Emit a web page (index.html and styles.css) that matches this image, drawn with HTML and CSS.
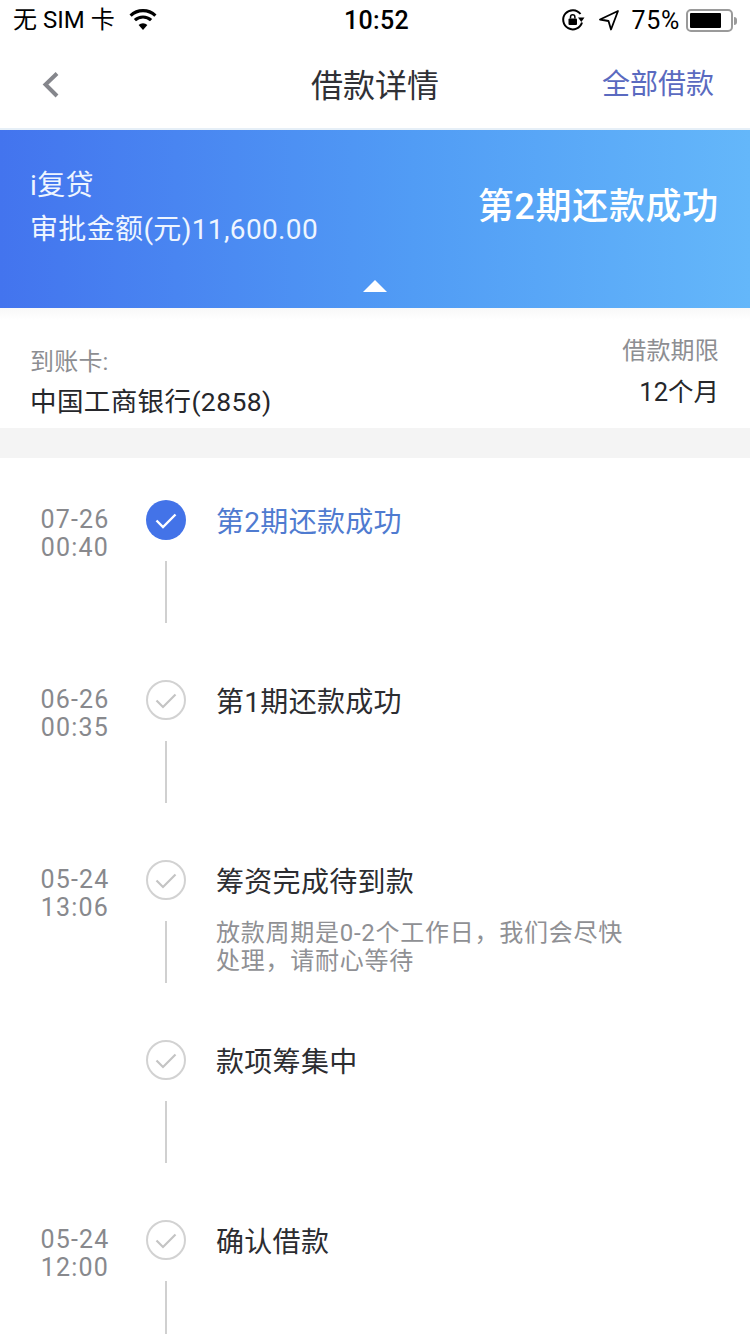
FILE: index.html
```html
<!DOCTYPE html>
<html lang="zh-CN">
<head>
<meta charset="utf-8">
<title>借款详情</title>
<link rel="stylesheet" href="styles.css">
</head>
<body>
<div class="page">
  <div class="status">
    <div class="status-side">
      <span class="carrier">无 SIM 卡</span>
      <svg class="wifi" viewBox="0 0 30 22" width="30" height="22"><path d="M15 21l-4.400-5a6.400 6.400 0 0 1 8.800 0z" fill="#000"/><path d="M6.900 11.200a11.800 11.800 0 0 1 16.200 0" fill="none" stroke="#000" stroke-width="3.200"/><path d="M2.600 6.600a18 18 0 0 1 24.800 0" fill="none" stroke="#000" stroke-width="3.200"/></svg>
    </div>
    <span class="clock">10:52</span>
    <div class="status-side status-right">
      <svg class="lock" viewBox="0 0 24 24" width="24" height="24"><path d="M21 14.500A9.600 9.600 0 1 1 19.500 6" fill="none" stroke="#000" stroke-width="2"/><path d="M17 9.500h6.500l-3.200 4.500z" fill="#000"/><rect x="7.500" y="10.500" width="8.500" height="6.500" rx="1" fill="#000"/><path d="M9.500 10.500V9a2.200 2.200 0 0 1 4.400 0v1.500" fill="none" stroke="#000" stroke-width="1.500"/></svg>
      <svg class="arrow" viewBox="0 0 22 22" width="22" height="22"><path d="M20 2L2 10.500l8.500 1.500L13 20.500z" fill="none" stroke="#000" stroke-width="1.800" stroke-linejoin="round"/></svg>
      <span class="pct">75%</span>
      <div class="battery"><div class="battery-fill"></div></div>
      <div class="battery-tip"></div>
    </div>
  </div>

  <div class="nav">
    <div class="nav-side nav-back">
      <svg viewBox="0 0 24 32" width="24" height="32"><path d="M18 4.500L6.500 15.500 18 27" fill="none" stroke="#85868c" stroke-width="4"/></svg>
    </div>
    <div class="nav-title">借款详情</div>
    <div class="nav-side nav-link">全部借款</div>
  </div>

  <div class="banner">
    <div class="banner-left">
      <div class="banner-product">i复贷</div>
      <div class="banner-amount">审批金额(元)11,600.00</div>
    </div>
    <div class="banner-status">第2期还款成功</div>
    <div class="banner-caret"></div>
  </div>

  <div class="info">
    <div class="info-col">
      <div class="info-label">到账卡:</div>
      <div class="info-value">中国工商银行(2858)</div>
    </div>
    <div class="info-col info-right">
      <div class="info-label">借款期限</div>
      <div class="info-value">12个月</div>
    </div>
  </div>

  <div class="band"></div>

  <div class="timeline">
    <div class="row">
      <div class="time"><div>07-26</div><div>00:40</div></div>
      <div class="node">
        <svg viewBox="0 0 40 40" width="40" height="40"><circle cx="20" cy="20" r="20" fill="#4373e8"/><path d="M10.500 20.500l6.500 6.500 12.500-12.500" fill="none" stroke="#fff" stroke-width="2.400"/></svg>
        <div class="line"></div>
      </div>
      <div class="body"><div class="step step-active">第2期还款成功</div></div>
    </div>
    <div class="row">
      <div class="time"><div>06-26</div><div>00:35</div></div>
      <div class="node">
        <svg viewBox="0 0 40 40" width="40" height="40"><circle cx="20" cy="20" r="19" fill="none" stroke="#d2d2d2" stroke-width="2"/><path d="M10.500 20.500l6.500 6.500 12.500-12.500" fill="none" stroke="#c4c4c4" stroke-width="2.200"/></svg>
        <div class="line"></div>
      </div>
      <div class="body"><div class="step">第1期还款成功</div></div>
    </div>
    <div class="row">
      <div class="time"><div>05-24</div><div>13:06</div></div>
      <div class="node">
        <svg viewBox="0 0 40 40" width="40" height="40"><circle cx="20" cy="20" r="19" fill="none" stroke="#d2d2d2" stroke-width="2"/><path d="M10.500 20.500l6.500 6.500 12.500-12.500" fill="none" stroke="#c4c4c4" stroke-width="2.200"/></svg>
        <div class="line"></div>
      </div>
      <div class="body">
        <div class="step">筹资完成待到款</div>
        <div class="note">放款周期是0-2个工作日，我们会尽快<br>处理，请耐心等待</div>
      </div>
    </div>
    <div class="row">
      <div class="time"></div>
      <div class="node">
        <svg viewBox="0 0 40 40" width="40" height="40"><circle cx="20" cy="20" r="19" fill="none" stroke="#d2d2d2" stroke-width="2"/><path d="M10.500 20.500l6.500 6.500 12.500-12.500" fill="none" stroke="#c4c4c4" stroke-width="2.200"/></svg>
        <div class="line"></div>
      </div>
      <div class="body"><div class="step">款项筹集中</div></div>
    </div>
    <div class="row">
      <div class="time"><div>05-24</div><div>12:00</div></div>
      <div class="node">
        <svg viewBox="0 0 40 40" width="40" height="40"><circle cx="20" cy="20" r="19" fill="none" stroke="#d2d2d2" stroke-width="2"/><path d="M10.500 20.500l6.500 6.500 12.500-12.500" fill="none" stroke="#c4c4c4" stroke-width="2.200"/></svg>
        <div class="line"></div>
      </div>
      <div class="body"><div class="step">确认借款</div></div>
    </div>
  </div>
</div>
</body>
</html>
```
FILE: styles.css
```css
* { box-sizing: border-box; }
html, body { margin: 0; padding: 0; background: #fff; }
body {
  font-family: Roboto, "Noto Sans CJK SC", sans-serif;
  color: #26272b;
}
.page { width: 750px; height: 1334px; overflow: hidden; background: #fff; }

.status {
  height: 40px;
  padding: 0 0 0 13px;
  display: flex;
  align-items: center;
  justify-content: space-between;
  position: relative;
  color: #000;
}
.status-side { display: flex; align-items: center; }
.carrier { font-size: 24px; line-height: 40px; }
.wifi { margin-left: 13px; }
.clock { font-size: 25px; font-weight: 500; letter-spacing: 0.300px; position: absolute; left: 344px; top: 6px; line-height: 30px; }
.status-right { padding-right: 13px; }
.arrow { margin-left: 13px; }
.pct { font-size: 25px; letter-spacing: 0.700px; margin-left: 11px; line-height: 40px; padding-top: 2px; }
.battery {
  width: 47px;
  height: 23px;
  margin-left: 6px;
  margin-top: 1px;
  border: 2px solid #9a9a9a;
  border-radius: 5px;
  padding: 2px;
}
.battery-fill { width: 31px; height: 15px; background: #000; border-radius: 1px; }
.battery-tip { width: 3px; height: 8px; margin-left: 1px; margin-top: 1px; background: #9a9a9a; border-radius: 0 3px 3px 0; }

.nav {
  height: 90px;
  padding: 1px 36px 0 39px;
  border-bottom: 2px solid #e6eff7;
  display: flex;
  align-items: center;
  justify-content: space-between;
  position: relative;
}
.nav-side { display: flex; align-items: center; }
.nav-title {
  position: absolute;
  left: 0;
  right: 0;
  top: 26px;
  text-align: center;
  font-size: 32px;
  line-height: 40px;
  color: #303136;
}
.nav-link { font-size: 28px; line-height: 40px; color: #5a6ac0; }

.banner {
  height: 178px;
  background: linear-gradient(90deg, #4374ee 0%, #519cf5 55%, #64b7fa 100%);
  display: flex;
  justify-content: space-between;
  align-items: flex-start;
  padding: 34px 31px 0 30px;
  position: relative;
  color: #fff;
}
.banner-left { font-size: 28px; color: #eef5ff; letter-spacing: 0.350px; }
.banner-product { line-height: 43px; }
.banner-amount { line-height: 45px; }
.banner-status { font-size: 36px; font-weight: 500; line-height: 46px; margin-top: 20px; letter-spacing: 0.700px; }
.banner-caret {
  position: absolute;
  left: 363px;
  bottom: 16px;
  width: 0;
  height: 0;
  border-left: 12px solid transparent;
  border-right: 12px solid transparent;
  border-bottom: 12px solid #fff;
}

.info {
  height: 120px;
  padding: 36px 31px 0 30px;
  display: flex;
  justify-content: space-between;
  background: linear-gradient(180deg, #f8f8f8 0, #fff 12px);
}
.info-label { font-size: 24px; line-height: 36px; color: #8d8e92; letter-spacing: 0.200px; }
.info-value { font-size: 26.500px; line-height: 38px; color: #26272b; margin-top: 3px; letter-spacing: 0.400px; }
.info-right { text-align: right; margin-top: -11px; }
.info-right .info-value { font-size: 25.500px; margin-top: 4px; letter-spacing: 0; }

.band { height: 30px; background: #f4f4f4; }

.timeline { padding-top: 42px; }
.row {
  height: 180px;
  display: flex;
  align-items: flex-start;
}
.time {
  width: 146px;
  padding: 6px 0 0 0;
  font-size: 25px;
  line-height: 28px;
  letter-spacing: 1.200px;
  color: #88898d;
}
.time div { width: 150px; text-align: center; }
.node {
  width: 40px;
  display: flex;
  flex-direction: column;
  align-items: center;
}
.node svg { display: block; flex: none; }
.line { width: 2px; height: 62px; margin-top: 21px; background: #d0d0d0; }
.body { margin-left: 30px; padding-top: 3px; }
.step { font-size: 28px; line-height: 40px; color: #2c2d31; letter-spacing: 0.300px; }
.step-active { color: #4f7bd0; }
.note {
  margin-top: 16px;
  font-size: 24px;
  line-height: 28px;
  letter-spacing: 0.750px;
  color: #8f9094;
}
```
